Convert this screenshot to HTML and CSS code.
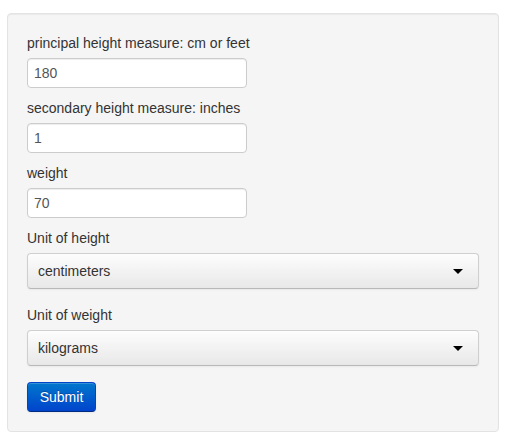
FILE: index.html
```html
<!DOCTYPE html>
<html>
<head>
<meta charset="utf-8">
<link rel="stylesheet" href="styles.css">
</head>
<body>
<div class="page">
  <form class="well">
    <div class="field">
      <label class="lbl" for="h1">principal height measure: cm or feet</label>
      <input class="txt" id="h1" type="text" value="180">
    </div>
    <div class="field">
      <label class="lbl" for="h2">secondary height measure: inches</label>
      <input class="txt" id="h2" type="text" value="1">
    </div>
    <div class="field">
      <label class="lbl" for="w">weight</label>
      <input class="txt" id="w" type="text" value="70">
    </div>
    <div class="field sel-field">
      <label class="lbl">Unit of height</label>
      <div class="sel"><span class="sel-text">centimeters</span></div>
    </div>
    <div class="field sel-field">
      <label class="lbl">Unit of weight</label>
      <div class="sel"><span class="sel-text">kilograms</span></div>
    </div>
    <button type="button" class="btn">Submit</button>
  </form>
</div>
</body>
</html>
```
FILE: styles.css
```css
html, body {
  margin: 0;
  padding: 0;
  background: #fff;
}
body {
  font-family: "Liberation Sans", Arial, sans-serif;
  font-size: 14px;
  line-height: 20px;
  color: #333;
}
.page {
  padding: 13px 12px 0 7px;
}
.well {
  width: 452px;
  margin: 0;
  padding: 19px;
  background: #f5f5f5;
  border: 1px solid #e3e3e3;
  border-radius: 4px;
  box-shadow: inset 0 1px 1px rgba(0,0,0,0.05);
  display: flex;
  flex-direction: column;
  align-items: flex-start;
}
.field {
  display: flex;
  flex-direction: column;
  align-items: flex-start;
  margin-bottom: 10px;
  align-self: stretch;
}
.sel-field {
  margin-bottom: 16px;
}
.lbl {
  display: block;
  height: 20px;
  margin-bottom: 5px;
  color: #333;
}
.txt {
  box-sizing: border-box;
  width: 220px;
  height: 30px;
  padding: 4px 6px;
  margin: 0;
  font-family: "Liberation Sans", Arial, sans-serif;
  font-size: 14px;
  line-height: 20px;
  color: #555;
  background: #fff;
  border: 1px solid #ccc;
  border-radius: 4px;
  box-shadow: inset 0 1px 1px rgba(0,0,0,0.075);
  outline: none;
}
.sel {
  position: relative;
  box-sizing: border-box;
  align-self: stretch;
  height: 36px;
  padding: 7px 10px;
  color: #333;
  background: linear-gradient(to bottom, #fdfdfd 0%, #e8e8e8 100%);
  border: 1px solid #cfcfcf;
  border-bottom-color: #b8b8b8;
  border-radius: 4px;
  box-shadow: inset 0 1px 0 rgba(255,255,255,0.2), 0 1px 2px rgba(0,0,0,0.05);
}
.sel-text {
  display: block;
  line-height: 20px;
}
.sel::after {
  content: "";
  position: absolute;
  right: 15px;
  top: 15px;
  width: 0;
  height: 0;
  border-style: solid;
  border-width: 5px 5px 0 5px;
  border-color: #000 transparent transparent transparent;
}
.btn {
  box-sizing: border-box;
  width: 69px;
  height: 30px;
  padding: 4px 0;
  margin: 0;
  font-family: "Liberation Sans", Arial, sans-serif;
  font-size: 14px;
  line-height: 20px;
  text-align: center;
  color: #fff;
  text-shadow: 0 -1px 0 rgba(0,0,0,0.25);
  background: linear-gradient(to bottom, #0077cc, #0044cc);
  border: 1px solid #0044cc;
  border-bottom-color: #002a80;
  border-radius: 4px;
  box-shadow: inset 0 1px 0 rgba(255,255,255,0.2), 0 1px 2px rgba(0,0,0,0.05);
  cursor: pointer;
}
```
